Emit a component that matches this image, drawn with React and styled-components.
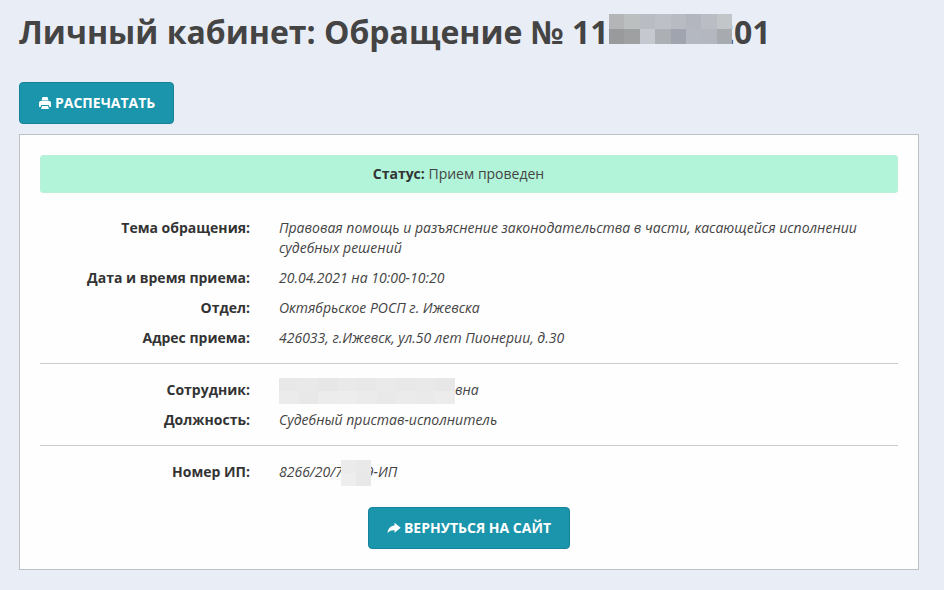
import React from "react";
import styled, { createGlobalStyle } from "styled-components";

const GlobalStyle = createGlobalStyle`
  * {
    box-sizing: border-box;
  }
  body {
    margin: 0;
    background: #e9edf5;
    color: #333;
    font-family: "Open Sans", sans-serif;
    font-size: 14px;
    line-height: 20px;
  }
`;

// Page wrapper that holds the content column.
const Page = styled.main`
  padding: 12px 25px 20px 19px;
`;

const Title = styled.h1`
  margin: 0 0 30px;
  font-size: 32px;
  line-height: 40px;
  font-weight: 700;
  color: #444;
`;

// Main action button, used for printing and for going back.
const Button = styled.button`
  display: inline-flex;
  align-items: center;
  gap: 3px;
  padding: 10px 18px;
  border: 1px solid #17839a;
  border-radius: 4px;
  background: #1b95ab;
  color: #fff;
  font-family: inherit;
  font-size: 14px;
  line-height: 20px;
  font-weight: 700;
  text-transform: uppercase;
  cursor: pointer;
`;

const Icon = styled.svg`
  width: 14px;
  height: 14px;
  fill: currentColor;
`;

// White card with the details of the appeal.
const Card = styled.section`
  margin-top: 10px;
  padding: 20px;
  border: 1px solid #bfc2c6;
  background: #fefefe;
`;

const Status = styled.div`
  margin-bottom: 25px;
  padding: 8px 35px 8px 14px;
  border: 1px solid #b9f0d6;
  border-radius: 3px;
  background: #b2f4da;
  text-align: center;
`;

// List of label / value pairs.
const Details = styled.dl`
  display: grid;
  grid-template-columns: 210px 1fr;
  gap: 10px 29px;
  margin: 0;
`;

const Label = styled.dt`
  font-weight: 700;
  text-align: right;
`;

const Value = styled.dd`
  margin: 0;
  color: #444;
  font-style: italic;
`;

const StatusText = styled.span`
  color: #444;
`;

const Divider = styled.hr`
  margin: 15px 0 16px;
  border: 0;
  border-top: 1px solid #ccc;
`;

const Footer = styled.div`
  margin-top: 25px;
  text-align: center;
`;

// Pixelated block that hides personal data and overlaps the text next to it.
const Mosaic = styled.svg`
  position: relative;
  width: ${({ $width }) => $width}px;
  height: ${({ $height }) => $height}px;
  margin: -6px ${({ $after }) => -$after}px -6px ${({ $before }) => -$before}px;
  vertical-align: middle;
`;

// The heading block stands on the baseline of the digits.
const TitleMosaic = styled(Mosaic)`
  margin-bottom: 0;
  vertical-align: baseline;
`;

const titleCells = [
  ["#b3b5b7", "#bcbfc0", "#b9bdc3", "#bdc0c6", "#b8bcc2", "#b3b6bf", "#babdc3", "#c3c6c9"],
  ["#999a9b", "#9fa0a1", "#c5c8ce", "#acafb4", "#a0a4ae", "#b3b8c1", "#b4b7bf", "#a7aaae"],
];

const nameCells = [
  ["#e8e8e8", "#e9e9e9", "#e7e7e7", "#e9e9e9", "#e8e8e8", "#eaeaea", "#e8e8e8", "#e9e9e9", "#e7e7e7"],
  ["#ebebeb", "#e8e8e8", "#ececec", "#ededed", "#ebebeb", "#e9e9e9", "#ebebeb", "#eaeaea", "#ececec"],
];

const numberCells = [
  ["#ebebeb", "#e9e9e9"],
  ["#eeeeee", "#e8e8e8"],
];

const Mask = ({ as: Block = Mosaic, cells, width, height, before = 0, after = 0 }) => (
  <Block
    $width={width}
    $height={height}
    $before={before}
    $after={after}
    viewBox={`0 0 ${cells[0].length} ${cells.length}`}
    preserveAspectRatio="none"
    shapeRendering="crispEdges"
    aria-hidden="true"
  >
    {cells.map((row, y) =>
      row.map((fill, x) => (
        <rect key={`${x}-${y}`} x={x} y={y} width="1" height="1" fill={fill} />
      ))
    )}
  </Block>
);

const PrintIcon = () => (
  <Icon viewBox="0 0 14 14" aria-hidden="true">
    <path d="M4.500 1h5l1 3.500h-7z" />
    <path d="M2 5h10l1 1.500V11h-1.500l-.8-2H3.300l-.8 2H1V6.500z" />
    <path d="M4 10h6l1 3H3z" />
  </Icon>
);

const ShareIcon = () => (
  <Icon viewBox="0 0 14 14" aria-hidden="true">
    <path d="M7.500 1.800l6.200 5-6.200 5V9.200C4.800 9 2.600 9.600.5 12 1 7.600 3.600 4.600 7.500 4.400z" />
  </Icon>
);

const App = () => {
  return (
    <>
      <GlobalStyle />
      <Page>
        <Title>
          Личный кабинет: Обращение № 11
          <Mask as={TitleMosaic} cells={titleCells} width={123} height={30} after={16} />
          201
        </Title>
        <Button type="button">
          <PrintIcon />
          Распечатать
        </Button>
        <Card>
          <Status>
            <b>Статус:</b> <StatusText>Прием проведен</StatusText>
          </Status>
          <Details>
            <Label>Тема обращения:</Label>
            <Value>
              Правовая помощь и разъяснение законодательства в части, касающейся
              исполнении судебных решений
            </Value>
            <Label>Дата и время приема:</Label>
            <Value>20.04.2021 на 10:00-10:20</Value>
            <Label>Отдел:</Label>
            <Value>Октябрьское РОСП г. Ижевска</Value>
            <Label>Адрес приема:</Label>
            <Value>426033, г.Ижевск, ул.50 лет Пионерии, д.30</Value>
          </Details>
          <Divider />
          <Details>
            <Label>Сотрудник:</Label>
            <Value>
              <Mask cells={nameCells} width={176} height={26} />
              вна
            </Value>
            <Label>Должность:</Label>
            <Value>Судебный пристав-исполнитель</Value>
          </Details>
          <Divider />
          <Details>
            <Label>Номер ИП:</Label>
            <Value>
              8266/20/7
              <Mask cells={numberCells} width={30} height={26} before={2} after={5} />
              9-ИП
            </Value>
          </Details>
          <Footer>
            <Button type="button">
              <ShareIcon />
              Вернуться на сайт
            </Button>
          </Footer>
        </Card>
      </Page>
    </>
  );
};

export default App;
